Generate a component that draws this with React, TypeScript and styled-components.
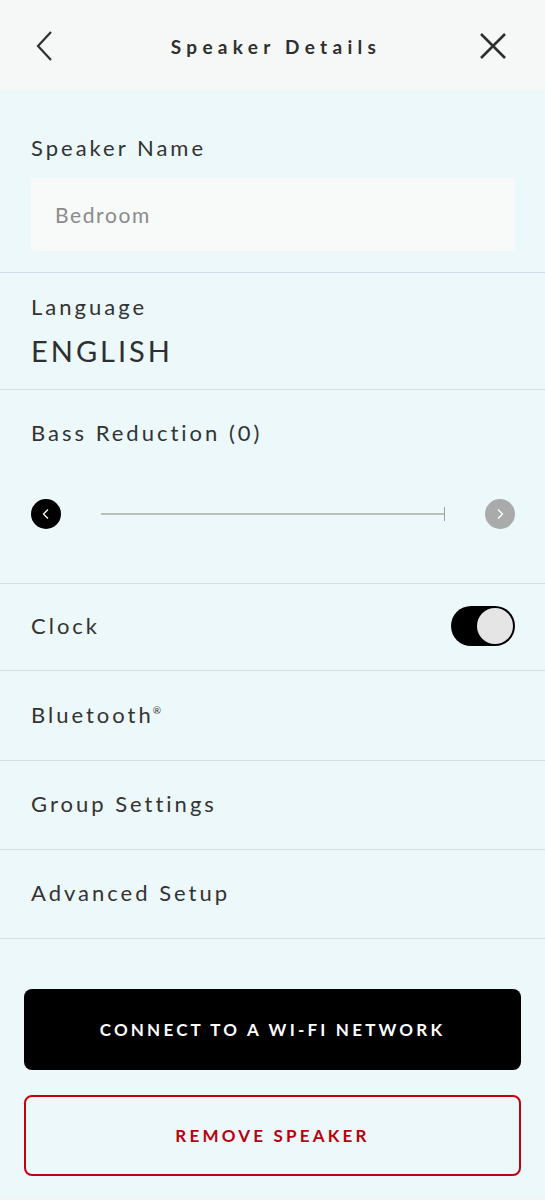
import React, { useState } from "react";
import styled, { createGlobalStyle } from "styled-components";

const Global = createGlobalStyle`
  html, body {
    margin: 0;
    padding: 0;
    background: #ecf8f9;
  }
  body {
    font-family: "Lato", "Liberation Sans", sans-serif;
    color: #333;
  }
`;

const Page = styled.div`
  width: 545px;
  min-height: 1200px;
  display: flex;
  flex-direction: column;
  background: #ecf8f9;
`;

const Header = styled.header`
  height: 90px;
  background: #f6f7f7;
  display: flex;
  align-items: center;
  justify-content: space-between;
  padding: 2px 34px 0 27px;
  box-sizing: border-box;
`;

const IconButton = styled.button`
  width: 36px;
  height: 36px;
  border: none;
  background: none;
  padding: 0;
  display: flex;
  align-items: center;
  justify-content: center;
  cursor: pointer;
`;

const Title = styled.h1`
  margin: 0 0 0 14px;
  font-size: 19px;
  font-weight: 700;
  letter-spacing: 5.3px;
  color: #2e2f30;
`;

const Section = styled.section<{ $height: number; $line?: string }>`
  height: ${(p) => p.$height}px;
  box-sizing: border-box;
  border-bottom: 1.5px solid ${(p) => p.$line || "#d3dfe1"};
  padding: 0 30px 0 31px;
  display: flex;
  flex-direction: column;
`;

const Label = styled.div`
  font-size: 22px;
  letter-spacing: 3px;
  color: #333;
  line-height: 1;
`;

const NameBlock = styled(Section)`
  padding-top: 47px;
`;

const Input = styled.div`
  margin-top: 19px;
  height: 73px;
  background: #f8f9f9;
  display: flex;
  align-items: center;
  padding-left: 24px;
  font-size: 21px;
  letter-spacing: 1.6px;
  color: #8a8b8c;
  border-radius: 2px;
`;

const LangBlock = styled(Section)`
  padding-top: 23px;
`;

const Value = styled.div`
  margin-top: 18px;
  font-size: 29px;
  letter-spacing: 3px;
  color: #2e2f30;
  line-height: 1;
`;

const BassBlock = styled(Section)`
  padding-top: 32px;
`;

const SliderRow = styled.div`
  margin-top: 55px;
  display: flex;
  align-items: center;
`;

const Step = styled.div<{ $active?: boolean }>`
  width: 30px;
  height: 30px;
  border-radius: 50%;
  background: ${(p) => (p.$active ? "#000" : "#a9abab")};
  display: flex;
  align-items: center;
  justify-content: center;
  flex-shrink: 0;
`;

const Track = styled.div`
  flex: 1;
  margin: 0 40px;
  height: 2px;
  background: #bdbfbf;
  position: relative;
  &::after {
    content: "";
    position: absolute;
    right: 0;
    top: -6px;
    width: 1.5px;
    height: 14px;
    background: #9fa1a1;
  }
`;

const Row = styled.div<{ $height: number }>`
  height: ${(p) => p.$height}px;
  box-sizing: border-box;
  border-bottom: 1.5px solid #d3dfe1;
  padding: 0 30px 2px 31px;
  display: flex;
  align-items: center;
  justify-content: space-between;
`;

const Sup = styled.sup`
  font-size: 10px;
  margin-left: -1px;
  vertical-align: 9px;
  line-height: 0;
  color: #333;
  letter-spacing: 0;
`;

const Toggle = styled.button<{ $on: boolean }>`
  width: 64px;
  height: 40px;
  border-radius: 20px;
  border: none;
  padding: 0;
  background: ${(p) => (p.$on ? "#000" : "#c8c9c9")};
  position: relative;
  cursor: pointer;
  &::after {
    content: "";
    position: absolute;
    top: 2px;
    left: ${(p) => (p.$on ? "26px" : "2px")};
    width: 36px;
    height: 36px;
    border-radius: 50%;
    background: #e5e5e6;
  }
`;

const Actions = styled.div`
  padding: 50px 24px 20px 24px;
  display: flex;
  flex-direction: column;
  gap: 25px;
`;

const Button = styled.button<{ $variant: "primary" | "danger" }>`
  height: 81px;
  border-radius: 8px;
  font-family: "Lato", "Liberation Sans", sans-serif;
  font-size: 17px;
  font-weight: 700;
  letter-spacing: 3.2px;
  cursor: pointer;
  background: ${(p) => (p.$variant === "primary" ? "#000" : "transparent")};
  color: ${(p) => (p.$variant === "primary" ? "#fff" : "#b8000f")};
  border: ${(p) => (p.$variant === "primary" ? "none" : "2px solid #c4000f")};
`;

const Footer = styled.div`
  height: 5px;
  background: #f3f4f4;
`;

const Chevron = ({ dir, color, size, width }: { dir: "left" | "right"; color: string; size: number; width: number }) => (
  <svg width={size} height={size} viewBox="0 0 24 24" fill="none">
    <path
      d={dir === "left" ? "M15 4 L7 12 L15 20" : "M9 4 L17 12 L9 20"}
      stroke={color}
      strokeWidth={width}
      strokeLinecap="square"
      strokeLinejoin="miter"
    />
  </svg>
);

export default function App() {
  const [clock, setClock] = useState(true);
  return (
    <Page>
      <Global />
      <Header>
        <IconButton aria-label="Back">
          <svg width="20" height="32" viewBox="0 0 20 32" fill="none">
            <path d="M16 2 L3 16 L16 30" stroke="#2e2f30" strokeWidth="2.2" />
          </svg>
        </IconButton>
        <Title>Speaker Details</Title>
        <IconButton aria-label="Close">
          <svg width="28" height="28" viewBox="0 0 28 28" fill="none">
            <path d="M2 2 L26 26 M26 2 L2 26" stroke="#2e2f30" strokeWidth="2.6" />
          </svg>
        </IconButton>
      </Header>

      <NameBlock $height={183} $line="#d6d9e6">
        <Label>Speaker Name</Label>
        <Input>Bedroom</Input>
      </NameBlock>

      <LangBlock $height={117}>
        <Label>Language</Label>
        <Value>ENGLISH</Value>
      </LangBlock>

      <BassBlock $height={194}>
        <Label>Bass Reduction (0)</Label>
        <SliderRow>
          <Step $active>
            <Chevron dir="left" color="#fff" size={12} width={2.6} />
          </Step>
          <Track />
          <Step>
            <Chevron dir="right" color="#fff" size={12} width={2.6} />
          </Step>
        </SliderRow>
      </BassBlock>

      <Row $height={87}>
        <Label>Clock</Label>
        <Toggle $on={clock} onClick={() => setClock(!clock)} aria-label="Clock" />
      </Row>
      <Row $height={90}>
        <Label>
          Bluetooth<Sup>®</Sup>
        </Label>
      </Row>
      <Row $height={89}>
        <Label>Group Settings</Label>
      </Row>
      <Row $height={89}>
        <Label>Advanced Setup</Label>
      </Row>

      <Actions>
        <Button $variant="primary">CONNECT TO A WI-FI NETWORK</Button>
        <Button $variant="danger">REMOVE SPEAKER</Button>
      </Actions>
      <Footer />
    </Page>
  );
}
